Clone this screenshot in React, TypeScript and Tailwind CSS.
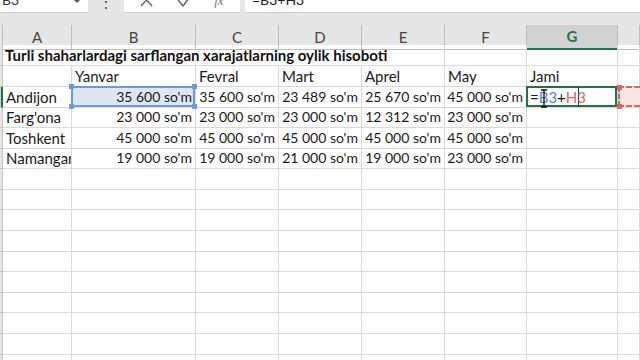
import React from "react";

const GRID = "grid grid-cols-[3px_69px_124px_83px_83px_83px_82px_91px_1fr]";
const LINE = "border-r border-b border-[#dadada]";
const FONT = { fontFamily: "Lato, 'Open Sans', sans-serif" } as const;

const rowH = [
  "h-[21px]", "h-[21px]", "h-[21px]", "h-[20px]", "h-[21px]", "h-[20px]", "h-[21px]", "h-[20px]",
  "h-[21px]", "h-[21px]", "h-[20px]", "h-[21px]", "h-[20px]", "h-[21px]", "h-[21px]", "h-[21px]",
];

const data: string[][] = [
  ["Farg'ona", "23 000 so'm", "23 000 so'm", "23 000 so'm", "12 312 so'm", "23 000 so'm"],
  ["Toshkent", "45 000 so'm", "45 000 so'm", "45 000 so'm", "45 000 so'm", "45 000 so'm"],
  ["Namangan", "19 000 so'm", "19 000 so'm", "21 000 so'm", "19 000 so'm", "23 000 so'm"],
];

function RowHead({ h, active }: { h: string; active?: boolean }) {
  return active ? (
    <div className={`${h} bg-[#d2d2d2] border-r-2 border-[#217346] border-b border-b-[#c4c4c4]`} />
  ) : (
    <div className={`${h} bg-[#e6e6e6] border-r border-b border-[#c4c4c4]`} />
  );
}

function Cell({ children, right, className = "" }: { children?: React.ReactNode; right?: boolean; className?: string }) {
  return (
    <div
      className={`${LINE} overflow-hidden whitespace-nowrap flex items-end pb-[1px] leading-[18px] text-[#1a1a1a] ${
        right ? "justify-end pr-[3px] text-[14px]" : "pl-[3px] text-[15px]"
      } ${className}`}
    >
      {children}
    </div>
  );
}

function Handle({ pos, color }: { pos: string; color: string }) {
  return <div className={`absolute w-[5px] h-[5px] ${color} ${pos}`} />;
}

export default function App() {
  const headers = ["A", "B", "C", "D", "E", "F", "G", ""];
  return (
    <div className="w-[640px] h-[360px] overflow-hidden bg-white" style={FONT}>
      {/* formula bar */}
      <div className="h-[25px] bg-[#e6e6e6] flex items-start">
        <div className="w-[88px] h-[13px] bg-white border-b border-[#cfcfcf] flex justify-between overflow-hidden">
          <span className="-mt-[7px] ml-[2px] text-[14px] leading-[14px] text-[#333]">B3</span>
          <svg width="8" height="4" viewBox="0 0 8 4" className="mr-[7px]">
            <path d="M1 0 L4 3 L7 0 Z" fill="#555" />
          </svg>
        </div>
        <div className="w-[36px] h-[13px] flex flex-col items-center justify-start gap-[4px] pt-[1px]">
          <div className="w-[2px] h-[2px] bg-[#666]" />
          <div className="w-[2px] h-[2px] bg-[#666]" />
        </div>
        <div className="w-[116px] h-[13px] bg-white border-b border-[#cfcfcf] flex items-start justify-around px-[6px] overflow-hidden">
          <svg width="16" height="8" viewBox="0 0 16 8">
            <path d="M1 -6 L12 6 M12 -6 L1 6" stroke="#666" strokeWidth="1.4" fill="none" />
          </svg>
          <svg width="16" height="8" viewBox="0 0 16 8">
            <path d="M1 0 L6 6 L15 -6" stroke="#666" strokeWidth="1.6" fill="none" />
          </svg>
          <span className="-mt-[6px] text-[13px] leading-[14px] italic text-[#777]" style={{ fontFamily: "'Liberation Serif', serif" }}>
            fx
          </span>
        </div>
        <div className="w-[5px]" />
        <div className="flex-1 h-[13px] bg-white border-b border-[#cfcfcf] overflow-hidden">
          <span className="block -mt-[7px] ml-[7px] text-[14px] leading-[14px] text-[#222]">=B3+H3</span>
        </div>
      </div>

      {/* column headers */}
      <div className={`${GRID} h-[20px] bg-[#e6e6e6]`}>
        <div className="border-r border-b border-[#bdbdbd]" />
        {headers.map((h, i) =>
          h === "G" ? (
            <div key={i} className="bg-[#d2d2d2] border-r border-[#bdbdbd] border-b-2 border-b-[#217346] flex items-center justify-center text-[15px] font-bold text-[#217346]">
              G
            </div>
          ) : (
            <div key={i} className="border-r border-b border-[#bdbdbd] flex items-center justify-center text-[15px] text-[#444]">
              {h}
            </div>
          )
        )}
      </div>

      {/* row 1 */}
      <div className={`${GRID} ${rowH[0]}`}>
        <RowHead h={rowH[0]} />
        <div className={`${LINE} col-span-5 flex items-end pb-[1px] pl-[2px] text-[15px] leading-[18px] font-bold text-[#111] whitespace-nowrap`}>
          Turli shaharlardagi sarflangan xarajatlarning oylik hisoboti
        </div>
        <Cell />
        <Cell />
        <Cell />
      </div>

      {/* row 2 */}
      <div className={`${GRID} ${rowH[1]}`}>
        <RowHead h={rowH[1]} />
        <Cell />
        {["Yanvar", "Fevral", "Mart", "Aprel", "May", "Jami"].map((t) => (
          <Cell key={t}>{t}</Cell>
        ))}
        <Cell />
      </div>

      {/* row 3 */}
      <div className={`${GRID} ${rowH[2]}`}>
        <RowHead h={rowH[2]} active />
        <Cell>Andijon</Cell>
        <div className={`${LINE} relative bg-[#dfe6f3]`}>
          <div className="absolute -left-[1px] -top-[1px] right-0 bottom-0 border-2 border-[#6f98d8]" />
          <Handle pos="-left-[3px] -top-[3px]" color="bg-[#6f98d8]" />
          <Handle pos="-right-[2px] -top-[3px]" color="bg-[#6f98d8]" />
          <Handle pos="-left-[3px] -bottom-[2px]" color="bg-[#6f98d8]" />
          <Handle pos="-right-[2px] -bottom-[2px]" color="bg-[#6f98d8]" />
          <div className="relative h-full flex items-end justify-end pr-[3px] pb-[1px] text-[14px] leading-[18px] text-[#1a1a1a]">
            35 600 so'm
          </div>
        </div>
        <Cell right>35 600 so'm</Cell>
        <Cell right>23 489 so'm</Cell>
        <Cell right>25 670 so'm</Cell>
        <Cell right>45 000 so'm</Cell>
        <div className={`${LINE} relative`}>
          <div className="absolute -left-[1px] -top-[1px] right-0 bottom-0 border-2 border-[#217346]" />
          <div className="absolute left-[51px] top-0 bottom-0 w-[1px] bg-[#1e3b2b]" />
          <div className="relative h-full flex items-end pl-[3px] pb-[1px] text-[15px] leading-[18px] whitespace-nowrap">
            <span className="text-[#1a1a1a]">=</span>
            <span className="text-[#5b83c8]">B3</span>
            <span className="text-[#1a1a1a]">+</span>
            <span className="text-[#d9676a]">H3</span>
          </div>
          <svg className="absolute left-[13px] top-[2px]" width="8" height="19" viewBox="0 0 8 19">
            <path d="M1 1 H7 M4 1 V18 M1 18 H7" stroke="#111" strokeWidth="1.3" fill="none" />
          </svg>
        </div>
        <div className="border-b border-[#dadada] relative bg-[#fbe4e4]">
          <div className="absolute left-0 -top-[1px] right-0 bottom-0 border-l-2 border-t-2 border-b-2 border-dashed border-[#e06666]" />
          <Handle pos="-left-[1px] -top-[2px]" color="bg-[#e06666]" />
          <Handle pos="-left-[1px] -bottom-[2px]" color="bg-[#e06666]" />
        </div>
      </div>

      {/* rows 4-6 */}
      {data.map((r, i) => (
        <div key={i} className={`${GRID} ${rowH[3 + i]}`}>
          <RowHead h={rowH[3 + i]} />
          <Cell>{r[0]}</Cell>
          {r.slice(1).map((v, j) => (
            <Cell key={j} right>
              {v}
            </Cell>
          ))}
          <Cell />
          <Cell />
        </div>
      ))}

      {/* empty rows */}
      {rowH.slice(6).map((h, i) => (
        <div key={i} className={`${GRID} ${h}`}>
          <RowHead h={h} />
          {[0, 1, 2, 3, 4, 5, 6, 7].map((c) => (
            <Cell key={c} />
          ))}
        </div>
      ))}
    </div>
  );
}
